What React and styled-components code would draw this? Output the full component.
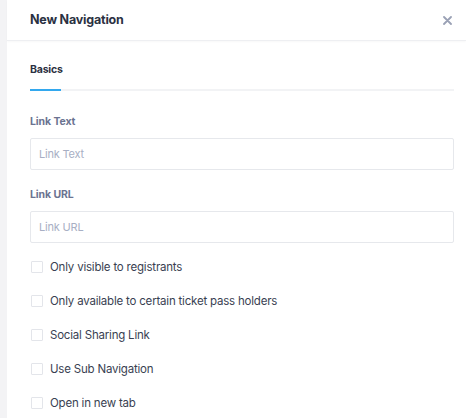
import React from 'react';
import styled, { createGlobalStyle } from 'styled-components';

const GlobalStyle = createGlobalStyle`
  html, body {
    margin: 0;
    padding: 0;
    background: #f3f3f5;
    font-family: Inter, "Noto Sans", sans-serif;
  }
`;

const Page = styled.div`
  display: flex;
  height: 418px;
  overflow: hidden;
`;

const Panel = styled.div`
  margin-left: 7px;
  flex: 1;
  background: #ffffff;
  display: flex;
  flex-direction: column;
`;

const Header = styled.div`
  height: 40px;
  display: flex;
  align-items: center;
  justify-content: space-between;
  padding: 0 12px 0 23px;
  border-bottom: 1px solid #eeeff2;
  box-shadow: 0 1px 2px rgba(0, 0, 0, 0.03);
`;

const Title = styled.h2`
  margin: 0;
  font-size: 12.5px;
  line-height: 16px;
  font-weight: 700;
  color: #2b3142;
  letter-spacing: -0.2px;
`;

const Close = styled.button`
  border: 0;
  background: none;
  padding: 0;
  width: 14px;
  height: 14px;
  display: flex;
  align-items: center;
  justify-content: center;
  cursor: pointer;
`;

const Body = styled.div`
  padding: 0 12px 0 23px;
  display: flex;
  flex-direction: column;
`;

const Tabs = styled.div`
  margin-top: 22px;
  border-bottom: 2px solid #f2f3f5;
  display: flex;
`;

const Tab = styled.div`
  font-size: 10.5px;
  line-height: 14px;
  font-weight: 700;
  letter-spacing: -0.2px;
  color: #2b3142;
  padding-bottom: 12px;
  width: 31px;
  position: relative;
  &::after {
    content: '';
    position: absolute;
    left: 0;
    right: 0;
    bottom: -2px;
    height: 2px;
    background: ${p => (p.active ? '#33a8ee' : 'transparent')};
  }
`;

const Field = styled.div`
  display: flex;
  flex-direction: column;
  margin-top: ${p => p.top}px;
`;

const Label = styled.label`
  font-size: 10.5px;
  line-height: 13px;
  font-weight: 700;
  letter-spacing: -0.1px;
  color: #6b7391;
  margin-bottom: 10px;
`;

const Input = styled.input`
  box-sizing: border-box;
  height: 32px;
  border: 1px solid #e6e8ec;
  border-radius: 2px;
  padding: 0 8px;
  font-family: inherit;
  font-size: 11px;
  letter-spacing: -0.2px;
  color: #2b3142;
  outline: none;
  &::placeholder {
    color: #a8afc4;
  }
`;

const Options = styled.div`
  display: flex;
  flex-direction: column;
  gap: 20px;
  margin-top: 17px;
`;

const Option = styled.label`
  display: flex;
  align-items: center;
  gap: 7px;
  font-size: 11.5px;
  letter-spacing: -0.2px;
  color: #3a3f52;
  height: 14px;
`;

const Box = styled.span`
  box-sizing: border-box;
  width: 12px;
  height: 12px;
  border: 1px solid #e3e5ea;
  border-radius: 1px;
  margin-left: 1px;
  background: #fff;
`;

const options = [
  'Only visible to registrants',
  'Only available to certain ticket pass holders',
  'Social Sharing Link',
  'Use Sub Navigation',
  'Open in new tab',
];

export default function App() {
  return (
    <>
      <GlobalStyle />
      <Page>
        <Panel>
          <Header>
            <Title>New Navigation</Title>
            <Close aria-label="Close">
              <svg width="9" height="9" viewBox="0 0 9 9">
                <path d="M1 1L8 8M8 1L1 8" stroke="#9aa1b5" strokeWidth="1.8" strokeLinecap="round" />
              </svg>
            </Close>
          </Header>
          <Body>
            <Tabs>
              <Tab active>Basics</Tab>
            </Tabs>
            <Field top={24}>
              <Label>Link Text</Label>
              <Input placeholder="Link Text" />
            </Field>
            <Field top={18}>
              <Label>Link URL</Label>
              <Input placeholder="Link URL" />
            </Field>
            <Options>
              {options.map(o => (
                <Option key={o}>
                  <Box />
                  {o}
                </Option>
              ))}
            </Options>
          </Body>
        </Panel>
      </Page>
    </>
  );
}
